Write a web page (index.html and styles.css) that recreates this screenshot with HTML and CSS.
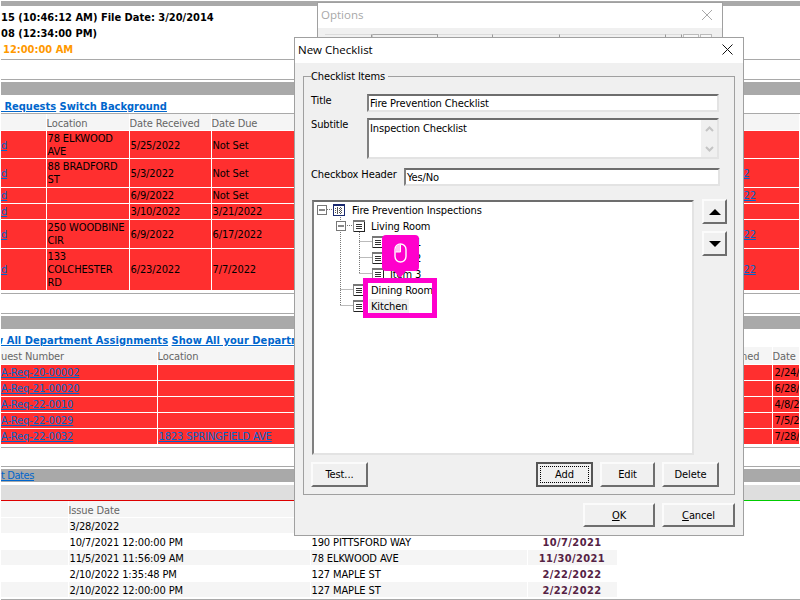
FILE: index.html
```html
<!DOCTYPE html>
<html lang="en">
<head>
    <meta charset="UTF-8">
    <title>New Checklist</title>
    <link rel="stylesheet" href="styles.css">
</head>
<body>
    <svg class="defs" width="0" height="0">
        <symbol id="page-icon" viewBox="0 0 12 12">
            <rect x="0.5" y="0.5" width="11" height="11" fill="#fff" stroke="#222"/>
            <rect x="0" y="0" width="12" height="2" fill="#777"/>
            <rect x="0" y="2" width="1" height="10" fill="#888"/>
            <path d="M3 4.5h6M3 6.5h6M3 8.5h6" stroke="#333" fill="none"/>
        </symbol>
        <symbol id="grid-icon" viewBox="0 0 12 12">
            <rect x="0.5" y="0.5" width="11" height="11" fill="#fff" stroke="#1a2a70"/>
            <rect x="0" y="0" width="12" height="2" fill="#1a2a70"/>
            <path d="M2 4.5h8M2 6.5h8M2 8.5h8M4.5 3v7M7.5 3v7" stroke="#555" fill="none" stroke-dasharray="1 1"/>
        </symbol>
    </svg>

    <!-- application behind the dialogs -->
    <div class="page">
        <div class="top-bar"></div>
        <div class="info">
            <div>15 (10:46:12 AM) File Date: 3/20/2014</div>
            <div>08 (12:34:00 PM)</div>
            <div class="orange">12:00:00 AM</div>
        </div>
        <div class="blank"></div>
        <div class="bar"></div>
        <div class="links ruled"><a href="#">&nbsp;Requests</a> <a href="#">Switch Background</a></div>

        <table class="grid requests">
            <colgroup><col class="c46"><col class="c83"><col class="c82"><col class="c83"><col class="c449"><col></colgroup>
            <tr><th></th><th>Location</th><th>Date Received</th><th>Date Due</th><th></th><th></th></tr>
            <tr class="red first"><td><a href="#">d</a></td><td>78 ELKWOOD AVE</td><td>5/25/2022</td><td>Not Set</td><td></td><td></td></tr>
            <tr class="red"><td><a href="#">d</a></td><td>88 BRADFORD ST</td><td>5/3/2022</td><td>Not Set</td><td></td><td><a href="#">2</a></td></tr>
            <tr class="red"><td><a href="#">d</a></td><td></td><td>6/9/2022</td><td>Not Set</td><td></td><td><a href="#">22</a></td></tr>
            <tr class="red"><td><a href="#">d</a></td><td></td><td>3/10/2022</td><td>3/21/2022</td><td></td><td></td></tr>
            <tr class="red"><td><a href="#">d</a></td><td>250 WOODBINE CIR</td><td>6/9/2022</td><td>6/17/2022</td><td></td><td><a href="#">22</a></td></tr>
            <tr class="red"><td><a href="#">d</a></td><td>133 COLCHESTER RD</td><td>6/23/2022</td><td>7/7/2022</td><td></td><td><a href="#">22</a></td></tr>
        </table>

        <div class="blank gap-top"></div>
        <div class="bar"></div>
        <div class="links assign"><a href="#">w All Department Assignments</a> <a href="#">Show All your Department Assignments</a></div>

        <table class="grid assignments">
            <colgroup><col class="c156"><col class="c558"><col class="c58"><col></colgroup>
            <tr><th>uest Number</th><th>Location</th><th>Assigned</th><th>Date</th></tr>
            <tr class="red"><td><a href="#">A-Req-20-00002</a></td><td></td><td></td><td>2/24/2022</td></tr>
            <tr class="red"><td><a href="#">A-Req-21-00020</a></td><td></td><td></td><td>6/28/2022</td></tr>
            <tr class="red"><td><a href="#">A-Req-22-0010</a></td><td></td><td></td><td>4/8/2022</td></tr>
            <tr class="red"><td><a href="#">A-Req-22-0029</a></td><td></td><td></td><td>7/5/2022</td></tr>
            <tr class="red"><td><a href="#">A-Req-22-0032</a></td><td><a href="#">1823 SPRINGFIELD AVE</a></td><td></td><td>7/28/2022</td></tr>
        </table>

        <div class="blank gap-top short"></div>
        <div class="bar"><a class="bar-link" href="#">t Dates</a></div>
        <div class="band"></div>
        <div class="status-line"><span class="status-red"></span><span class="status-green"></span></div>

        <table class="grid permits">
            <colgroup><col class="c67"><col class="c241"><col class="c218"><col class="c90"></colgroup>
            <tr><th></th><th>Issue Date</th><th></th><th></th></tr>
            <tr class="shade"><td></td><td>3/28/2022</td><td></td><td></td></tr>
            <tr><td></td><td>10/7/2021 12:00:00 PM</td><td>190 PITTSFORD WAY</td><td class="due">10/7/2021</td></tr>
            <tr class="shade"><td></td><td>11/5/2021 11:56:09 AM</td><td>78 ELKWOOD AVE</td><td class="due">11/30/2021</td></tr>
            <tr><td></td><td>2/10/2022 1:35:48 PM</td><td>127 MAPLE ST</td><td class="due">2/22/2022</td></tr>
            <tr class="shade"><td></td><td>2/10/2022 12:00:00 PM</td><td>127 MAPLE ST</td><td class="due">2/22/2022</td></tr>
        </table>
        <div class="bottom-rule"></div>
    </div>

    <!-- Options window, mostly covered -->
    <div class="window options">
        <div class="titlebar">
            <span>Options</span>
            <svg class="close" width="10" height="10" viewBox="0 0 10 10"><path d="M0 0L10 10M10 0L0 10" stroke="#a8a8a8" fill="none"/></svg>
        </div>
        <div class="tabs">
            <span class="tab t47"></span><span class="tab active t66"></span><span class="tab t55"></span><span class="tab t67"></span><span class="tab t106"></span><span class="tab t15"></span><span class="tab t15 box"></span><span class="tab t12 box"></span>
        </div>
    </div>

    <!-- New Checklist dialog -->
    <div class="window dialog">
        <div class="titlebar">
            <span>New Checklist</span>
            <svg class="close" width="11" height="11" viewBox="0 0 11 11"><path d="M0.5 0.5L10.5 10.5M10.5 0.5L0.5 10.5" stroke="#111" fill="none"/></svg>
        </div>
        <div class="dialog-body">
            <fieldset class="group">
                <legend>Checklist Items</legend>
                <div class="form-row">
                    <label class="label">Title</label>
                    <div class="field">Fire Prevention Checklist</div>
                </div>
                <div class="form-row wide-gap">
                    <label class="label">Subtitle</label>
                    <div class="field area">
                        <span class="area-text">Inspection Checklist</span>
                        <div class="scroll">
                            <svg width="9" height="6" viewBox="0 0 9 6"><path d="M1 5L4.5 1.5L8 5" stroke="#c4c4c4" stroke-width="2" fill="none"/></svg>
                            <svg width="9" height="6" viewBox="0 0 9 6"><path d="M1 1L4.5 4.5L8 1" stroke="#c4c4c4" stroke-width="2" fill="none"/></svg>
                        </div>
                    </div>
                </div>
                <div class="form-row last">
                    <label class="label wide">Checkbox Header</label>
                    <div class="field">Yes/No</div>
                </div>

                <div class="tree-row">
                    <div class="tree">
                        <svg class="tree-lines" width="378" height="251" viewBox="314 203 378 251">
                            <path d="M327 210.5H333M340.5 216V222M340.5 231V306.5M345 226.5H353M340.5 290.5H353M340.5 306.5H353M359.5 231V274.5M359.5 242.5H372M359.5 258.5H372M359.5 274.5H372" stroke="#777" stroke-dasharray="1 1" fill="none"/>
                            <g fill="#fff" stroke="#777">
                                <rect x="317.5" y="206.5" width="9" height="9"/>
                                <rect x="336.5" y="222.5" width="9" height="9"/>
                            </g>
                            <path d="M319 211H325M338 227H344" stroke="#111" fill="none"/>
                        </svg>
                        <div class="node l0"><svg class="node-icon"><use href="#grid-icon"/></svg><span>Fire Prevention Inspections</span></div>
                        <div class="node l1"><svg class="node-icon"><use href="#page-icon"/></svg><span>Living Room</span></div>
                        <div class="node l2"><svg class="node-icon"><use href="#page-icon"/></svg><span>Item 1</span></div>
                        <div class="node l2"><svg class="node-icon"><use href="#page-icon"/></svg><span>Item 2</span></div>
                        <div class="node l2"><svg class="node-icon"><use href="#page-icon"/></svg><span>Item 3</span></div>
                        <div class="node l1"><svg class="node-icon"><use href="#page-icon"/></svg><span>Dining Room</span></div>
                        <div class="node l1"><svg class="node-icon"><use href="#page-icon"/></svg><span class="hover">Kitchen</span></div>

                        <!-- annotation over the tree -->
                        <div class="callout-box"></div>
                        <div class="callout">
                            <svg width="14" height="20" viewBox="0 0 14 20">
                                <rect x="1" y="1" width="11" height="18" rx="5.5" fill="none" stroke="#fff" stroke-width="1.4"/>
                                <path d="M1.5 9V6.5A5 5 0 0 1 6.5 1.5V9Z" fill="#ffc4f2"/>
                                <path d="M6.5 1.5V9H1.5" fill="none" stroke="#fff"/>
                            </svg>
                        </div>
                    </div>
                    <div class="move">
                        <button class="btn arrow"><span class="up"></span></button>
                        <button class="btn arrow"><span class="down"></span></button>
                    </div>
                </div>

                <div class="actions">
                    <button class="btn w57">Test...</button>
                    <button class="btn w57 default push">Add</button>
                    <button class="btn w55">Edit</button>
                    <button class="btn w57">Delete</button>
                </div>
            </fieldset>
            <div class="footer">
                <button class="btn w72"><u>O</u>K</button>
                <button class="btn w73"><u>C</u>ancel</button>
            </div>
        </div>
    </div>
</body>
</html>
```

FILE: styles.css
```css
body {
    margin: 0;
    height: 600px;
    overflow: hidden;
    background: #fff;
    color: #000;
    font-family: "DejaVu Sans Condensed", "DejaVu Sans", sans-serif;
    font-size: 11px;
    line-height: 13px;
    letter-spacing: -0.12px;
}
.defs {
    position: absolute;
}
a {
    color: #0066cc;
}

/* page behind */
.page {
    padding-left: 1px;
}
.top-bar {
    height: 5px;
    margin-top: 1px;
    background: #a9a9a9;
}
.info {
    height: 49px;
    padding-top: 4px;
    border-bottom: 1px solid #a9a9a9;
    font-weight: bold;
    line-height: 16px;
    letter-spacing: 0;
}
.orange {
    color: #ff9900;
    padding-left: 2px;
}
.blank {
    height: 19px;
    border-bottom: 1px solid #a9a9a9;
}
.gap-top {
    margin-top: 2px;
    border-top: 1px solid #a9a9a9;
}
.gap-top.short {
    height: 18px;
}
.bar {
    height: 13px;
    margin-top: 2px;
    background: #a9a9a9;
}
.bar-link {
    display: block;
    letter-spacing: -0.4px;
}
.links {
    height: 18px;
    padding-top: 5px;
    box-sizing: border-box;
    font-weight: bold;
    letter-spacing: 0;
    white-space: nowrap;
    overflow: hidden;
}
.links.ruled {
    height: 19px;
    border-bottom: 1px solid #a9a9a9;
}
.links.assign {
    letter-spacing: 0.05px;
}
.links.assign a:first-child {
    margin-left: -7px;
}
.band {
    height: 15px;
    margin-top: 3px;
    background: #dedede;
}
.status-line {
    display: flex;
    height: 1px;
}
.status-red {
    flex: 1;
    background: #dd0000;
}
.status-green {
    width: 57px;
    background: #00cc00;
}
.bottom-rule {
    margin-top: 1px;
    border-top: 1px solid #a9a9a9;
}

/* tables */
.grid {
    width: 799px;
    table-layout: fixed;
    border-collapse: collapse;
}
.grid th {
    height: 14px;
    padding: 2px 0 0;
    background: #f5f5f5;
    border-right: 1px solid #fff;
    border-bottom: 1px solid #fff;
    color: #666;
    font-weight: normal;
    text-align: left;
    white-space: nowrap;
    overflow: hidden;
}
.assignments th {
    height: 15px;
}
.grid td {
    padding: 1px 1px 1px 0;
    border-right: 1px solid #fff;
    border-bottom: 1px solid #fff;
    white-space: nowrap;
    overflow: hidden;
}
.requests td {
    padding-left: 1px;
    white-space: normal;
}
.requests td:first-child,
.requests td:last-child {
    padding-left: 0;
}
.assignments td:last-child {
    padding-left: 2px;
}
.assignments td:nth-child(2) {
    padding-left: 1px;
}
.red td {
    background: #ff2f2f;
}
.first td {
    padding-bottom: 0;
}
.shade td {
    background: #f5f5f5;
}
.due {
    color: #552244;
    font-weight: bold;
    letter-spacing: 0.4px;
    text-align: center;
}
.permits {
    width: 616px;
}
.permits td {
    padding: 2px 1px 0;
}
.c46 { width: 45px; }
.c83 { width: 83px; }
.c82 { width: 82px; }
.c449 { width: 449px; }
.c156 { width: 156px; }
.c558 { width: 558px; }
.c58 { width: 57px; }
.c67 { width: 67px; }
.c241 { width: 242px; }
.c218 { width: 217px; }
.c90 { width: 90px; }

/* windows */
.window {
    position: absolute;
    box-sizing: border-box;
    border: 1px solid #a0a0a0;
    background: #f0f0f0;
}
.titlebar {
    display: flex;
    justify-content: space-between;
    align-items: center;
    box-sizing: border-box;
    height: 25px;
    padding: 0 10px 2px 3px;
    background: #fff;
    font-family: "Open Sans", sans-serif;
    font-size: 11.5px;
    letter-spacing: 0;
}
.options {
    left: 317px;
    top: 2px;
    width: 406px;
    height: 100px;
    color: #a8a8a8;
}
.tabs {
    display: flex;
    padding: 6px 0 0 7px;
}
.tab {
    height: 8px;
    border-top: 1px solid #dcdcdc;
    border-right: 1px solid #999;
    box-sizing: border-box;
}
.tab.active {
    border-top-color: #aaa;
    border-left: 1px solid #ccc;
}
.tab.box {
    border: 1px solid #bbb;
    background: #f8f8f8;
    margin-left: 1px;
}
.t47 { width: 47px; }
.t66 { width: 66px; }
.t55 { width: 55px; }
.t67 { width: 67px; }
.t106 { width: 106px; }
.t15 { width: 16px; }
.t12 { width: 12px; }

.dialog {
    left: 294px;
    top: 37px;
    width: 450px;
    height: 499px;
}
.dialog-body {
    padding: 7px 8px 0;
}
.group {
    box-sizing: border-box;
    height: 425px;
    margin: 0;
    padding: 11px 15px 0 7px;
    border: 1px solid #a0a0a0;
    min-width: 0;
}
.group legend {
    padding: 0 3px 0 0;
    margin-left: 0;
}
.form-row {
    display: flex;
    margin-bottom: 6px;
}
.form-row.wide-gap {
    margin-bottom: 9px;
}
.form-row.last {
    margin-bottom: 13px;
    margin-right: -1px;
}
.label {
    flex: none;
    width: 56px;
}
.label.wide {
    width: 93px;
}
.field {
    flex: 1;
    height: 18px;
    box-sizing: border-box;
    padding: 1px 1px 0;
    border: 2px solid;
    border-color: #6d6d6d #e3e3e3 #e3e3e3 #808080;
    background: #fff;
}
.area {
    display: flex;
    justify-content: space-between;
    height: 41px;
    padding: 2px 0 0 1px;
}
.scroll {
    display: flex;
    flex-direction: column;
    justify-content: space-between;
    align-items: center;
    width: 16px;
    margin-top: -2px;
    padding: 6px 0 5px;
    box-sizing: border-box;
    background: #f0f0f0;
}
.tree-row {
    display: flex;
    align-items: flex-start;
    gap: 8px;
    margin-right: -9px;
}
.tree {
    position: relative;
    flex: none;
    box-sizing: border-box;
    width: 382px;
    height: 255px;
    margin: 1px 0 0 1px;
    border: 2px solid;
    border-color: #6d6d6d #e3e3e3 #e3e3e3 #808080;
    background: #fff;
    white-space: nowrap;
}
.tree-lines {
    position: absolute;
    left: 0;
    top: 0;
}
.node {
    position: relative;
    display: flex;
    align-items: center;
    gap: 6px;
    height: 16px;
}
.node-icon {
    width: 12px;
    height: 12px;
    flex: none;
}
.l0 { padding-left: 19px; gap: 7px; }
.l1 { padding-left: 39px; }
.l2 { padding-left: 58px; }
.hover {
    background: #f0f0f0;
    padding: 1px 2px;
    margin-left: -2px;
}
.callout-box {
    position: absolute;
    left: 49px;
    top: 76px;
    width: 64px;
    height: 30px;
    border: 5px solid #ff00cc;
}
.callout {
    position: absolute;
    left: 68px;
    top: 33px;
    display: flex;
    justify-content: center;
    align-items: center;
    width: 37px;
    height: 36px;
    border-radius: 4px;
    background: #ff00cc;
}
.callout::after {
    content: "";
    position: absolute;
    left: 12px;
    bottom: -7px;
    border-left: 6px solid transparent;
    border-right: 6px solid transparent;
    border-top: 7px solid #ff00cc;
}
.move {
    display: flex;
    flex: none;
    flex-direction: column;
    gap: 7px;
}
.btn {
    display: block;
    box-sizing: border-box;
    height: 24px;
    padding: 0;
    border: 2px solid;
    border-color: #fbfbfb #6e6e6e #6e6e6e #fbfbfb;
    background: #f0f0f0;
    color: #000;
    font: inherit;
    letter-spacing: inherit;
}
.arrow {
    display: flex;
    justify-content: center;
    align-items: center;
    width: 25px;
    height: 25px;
}
.up {
    border-left: 6px solid transparent;
    border-right: 6px solid transparent;
    border-bottom: 6px solid #000;
}
.down {
    border-left: 6px solid transparent;
    border-right: 6px solid transparent;
    border-top: 6px solid #000;
}
.actions {
    display: flex;
    gap: 7px;
    margin-top: 7px;
}
.actions .btn {
    height: 25px;
}
.push {
    margin-left: auto;
}
.default {
    border-color: #555;
    outline: 1px dotted #000;
    outline-offset: -5px;
}
.w57 { width: 57px; }
.w55 { width: 55px; }
.w72 { width: 72px; }
.w73 { width: 73px; }
.footer {
    display: flex;
    justify-content: flex-end;
    gap: 7px;
    margin-top: 8px;
}
```
